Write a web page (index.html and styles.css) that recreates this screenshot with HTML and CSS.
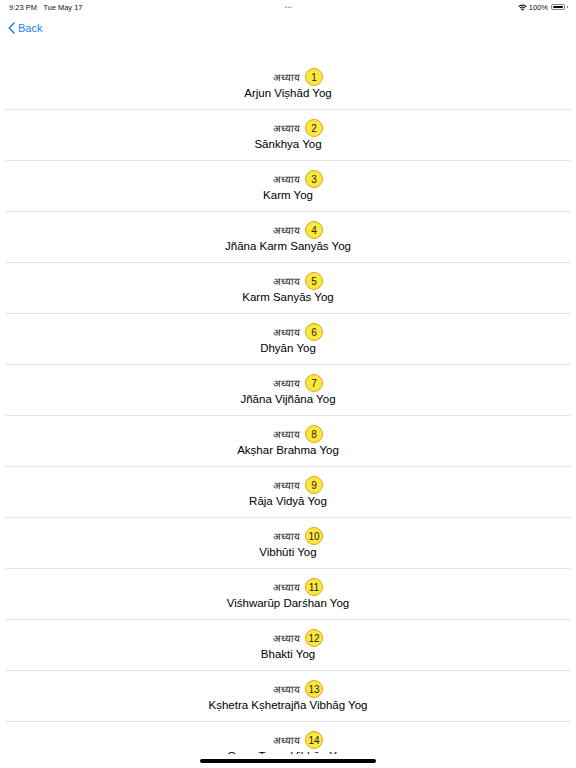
FILE: index.html
```html
<!DOCTYPE html>
<html>
<head>
<meta charset="utf-8">
<link rel="stylesheet" href="styles.css">
</head>
<body>
<div class="screen">
  <div class="status">
    <div class="st-left">9:23 PM&nbsp;&nbsp;&nbsp;Tue May 17</div>
    <div class="st-mid">•••</div>
    <div class="st-right">
      <svg class="wifi" width="9" height="7" viewBox="0 0 18 14"><path d="M9 13.5 L12 10 A5 5 0 0 0 6 10 Z" fill="#000"/><path d="M3.5 7.5 A8 8 0 0 1 14.5 7.5 L13 9 A6 6 0 0 0 5 9 Z" fill="#000"/><path d="M0.5 4.5 A12.5 12.5 0 0 1 17.5 4.5 L16 6 A10.5 10.5 0 0 0 2 6 Z" fill="#000"/></svg>
      <span>100%</span>
      <span class="battery"><span class="bfill"></span></span><span class="bcap"></span>
    </div>
  </div>
  <div class="nav">
    <svg class="chev" width="7" height="12" viewBox="0 0 7 12"><path d="M6 1 L1.3 6 L6 11" fill="none" stroke="#1a82fb" stroke-width="1.6" stroke-linecap="round" stroke-linejoin="round"/></svg>
    <span class="back">Back</span>
  </div>
  <div class="list">
    <div class="row"><div class="lbl"><span class="hi">अध्याय</span><span class="num">1</span></div><div class="title">Arjun Viṣhād Yog</div></div>
    <div class="row"><div class="lbl"><span class="hi">अध्याय</span><span class="num">2</span></div><div class="title">Sānkhya Yog</div></div>
    <div class="row"><div class="lbl"><span class="hi">अध्याय</span><span class="num">3</span></div><div class="title">Karm Yog</div></div>
    <div class="row"><div class="lbl"><span class="hi">अध्याय</span><span class="num">4</span></div><div class="title">Jñāna Karm Sanyās Yog</div></div>
    <div class="row"><div class="lbl"><span class="hi">अध्याय</span><span class="num">5</span></div><div class="title">Karm Sanyās Yog</div></div>
    <div class="row"><div class="lbl"><span class="hi">अध्याय</span><span class="num">6</span></div><div class="title">Dhyān Yog</div></div>
    <div class="row"><div class="lbl"><span class="hi">अध्याय</span><span class="num">7</span></div><div class="title">Jñāna Vijñāna Yog</div></div>
    <div class="row"><div class="lbl"><span class="hi">अध्याय</span><span class="num">8</span></div><div class="title">Akṣhar Brahma Yog</div></div>
    <div class="row"><div class="lbl"><span class="hi">अध्याय</span><span class="num">9</span></div><div class="title">Rāja Vidyā Yog</div></div>
    <div class="row"><div class="lbl"><span class="hi">अध्याय</span><span class="num">10</span></div><div class="title">Vibhūti Yog</div></div>
    <div class="row"><div class="lbl"><span class="hi">अध्याय</span><span class="num">11</span></div><div class="title">Viśhwarūp Darśhan Yog</div></div>
    <div class="row"><div class="lbl"><span class="hi">अध्याय</span><span class="num">12</span></div><div class="title">Bhakti Yog</div></div>
    <div class="row"><div class="lbl"><span class="hi">अध्याय</span><span class="num">13</span></div><div class="title">Kṣhetra Kṣhetrajña Vibhāg Yog</div></div>
    <div class="row"><div class="lbl"><span class="hi">अध्याय</span><span class="num">14</span></div><div class="title">Guṇa Traya Vibhāg Yog</div></div>
  </div>
  <div class="home"></div>
</div>
</body>
</html>
```
FILE: styles.css
```css
html, body {
  margin: 0;
  padding: 0;
  background: #fff;
}
.screen {
  width: 576px;
  height: 768px;
  overflow: hidden;
  font-family: "Liberation Sans", Roboto, "Noto Sans", sans-serif;
  color: #111;
  display: flex;
  flex-direction: column;
}
.status {
  height: 14px;
  flex: 0 0 14px;
  display: flex;
  align-items: center;
  justify-content: space-between;
  padding: 0 8px 0 9px;
  font-size: 7.5px;
  color: #111;
}
.st-left, .st-right { width: 120px; }
.st-mid { color: #999; font-size: 6px; letter-spacing: 0.5px; text-align: center; }
.st-right {
  display: flex;
  justify-content: flex-end;
  align-items: center;
  gap: 2px;
}
.battery {
  width: 14px;
  height: 6px;
  border: 0.8px solid #888;
  border-radius: 2px;
  box-sizing: border-box;
  padding: 0.6px;
  display: inline-flex;
  margin-left: 1px;
}
.bfill { flex: 1; background: #000; border-radius: 1px; }
.bcap { width: 1px; height: 2.5px; background: #888; }
.nav {
  height: 28px;
  flex: 0 0 28px;
  display: flex;
  align-items: center;
  padding-left: 8px;
  gap: 3px;
}
.back {
  color: #1a82fb;
  font-size: 11px;
}
.list {
  margin-top: 17px;
  flex: 0 0 695px;
  overflow: hidden;
  display: flex;
  flex-direction: column;
}
.row {
  flex: 0 0 51px;
  box-sizing: border-box;
  border-bottom: 1px solid #e6e6e6;
  margin: 0 5px;
  display: flex;
  flex-direction: column;
  align-items: center;
  padding-top: 9px;
}
.lbl {
  display: flex;
  align-items: center;
  gap: 5px;
  height: 18px;
  padding-left: 20px;
}
.hi {
  font-family: "Liberation Serif", "DejaVu Serif", serif;
  font-size: 10px;
  color: #222;
}
.num {
  width: 18px;
  height: 18px;
  border-radius: 50%;
  background: #fbe83c;
  border: 1px solid #e5a021;
  box-sizing: border-box;
  display: flex;
  align-items: center;
  justify-content: center;
  font-size: 10px;
  color: #222;
}
.title {
  font-size: 11.5px;
  line-height: 14px;
  margin-top: 0;
  color: #000;
}
.home {
  width: 176px;
  height: 4px;
  border-radius: 2px;
  background: #000;
  margin: 5px auto 0;
}
```
